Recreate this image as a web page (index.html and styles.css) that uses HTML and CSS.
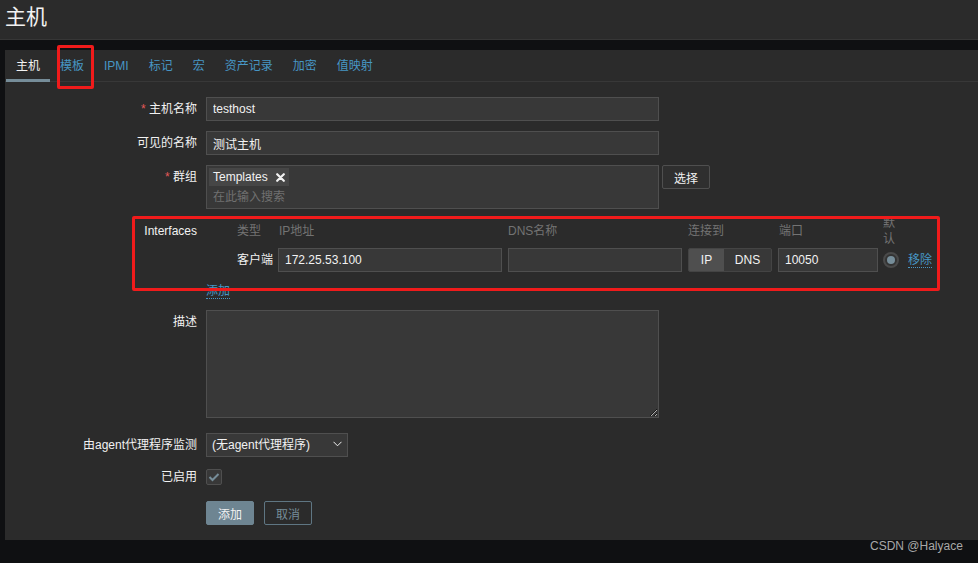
FILE: index.html
```html
<!DOCTYPE html>
<html lang="zh-CN">
<head>
<meta charset="utf-8">
<title>主机</title>
<link rel="stylesheet" href="styles.css">
</head>
<body>
<header class="page-header"><h1 class="page-title">主机</h1></header>
<main class="page-main">
  <section class="panel">
    <nav class="tabs">
      <a class="tab active">主机</a>
      <a class="tab">模板</a>
      <a class="tab">IPMI</a>
      <a class="tab">标记</a>
      <a class="tab">宏</a>
      <a class="tab">资产记录</a>
      <a class="tab">加密</a>
      <a class="tab">值映射</a>
    </nav>
    <form class="form">
      <div class="row">
        <label class="label"><span class="req">*</span> 主机名称</label>
        <div class="field"><input class="input wide" value="testhost"></div>
      </div>
      <div class="row">
        <label class="label">可见的名称</label>
        <div class="field"><input class="input wide" value="测试主机"></div>
      </div>
      <div class="row">
        <label class="label"><span class="req">*</span> 群组</label>
        <div class="field field-inline">
          <div class="multiselect">
            <span class="tag">Templates
              <svg class="tag-x" width="9" height="9" viewBox="0 0 9 9"><path d="M1.2 1.2 L7.8 7.8 M7.8 1.2 L1.2 7.8" stroke="#f2f2f2" stroke-width="2.2" stroke-linecap="round"/></svg>
            </span>
            <input class="ms-input" placeholder="在此输入搜索">
          </div>
          <button type="button" class="btn-grey">选择</button>
        </div>
      </div>
      <div class="row row-if">
        <label class="label label-if">Interfaces</label>
        <div class="field">
          <div class="if-grid">
            <span></span>
            <span class="if-head">类型</span>
            <span class="if-head if-ip">IP地址</span>
            <span class="if-head">DNS名称</span>
            <span class="if-head">连接到</span>
            <span class="if-head if-port">端口</span>
            <span class="if-head if-def">默认</span>
            <span></span>

            <span></span>
            <span class="if-type">客户端</span>
            <input class="input if-ip-in" value="172.25.53.100">
            <input class="input if-dns-in" value="">
            <div class="seg"><span class="seg-item on">IP</span><span class="seg-item">DNS</span></div>
            <input class="input if-port-in" value="10050">
            <span class="radio"><span class="radio-dot"></span></span>
            <a class="link">移除</a>
          </div>
          <div class="add-row"><a class="link">添加</a></div>
        </div>
      </div>
      <div class="row row-desc">
        <label class="label">描述</label>
        <div class="field"><textarea class="textarea"></textarea></div>
      </div>
      <div class="row row-agent">
        <label class="label">由agent代理程序监测</label>
        <div class="field">
          <div class="select"><span>(无agent代理程序)</span>
            <svg class="chev" width="9" height="6" viewBox="0 0 9 6"><path d="M0.5 0.8 L4.5 4.8 L8.5 0.8" fill="none" stroke="#f2f2f2" stroke-width="1"/></svg>
          </div>
        </div>
      </div>
      <div class="row row-enabled">
        <label class="label">已启用</label>
        <div class="field field-center">
          <span class="checkbox"><svg width="12" height="10" viewBox="0 0 12 10"><path d="M1.5 5 L4.5 8 L10.5 2" fill="none" stroke="#768d99" stroke-width="2"/></svg></span>
        </div>
      </div>
      <div class="row row-btns">
        <span></span>
        <div class="field field-inline">
          <button type="button" class="btn-main">添加</button>
          <button type="button" class="btn-alt">取消</button>
        </div>
      </div>
    </form>
  </section>
</main>
<div class="mark mark-tab"></div>
<div class="mark mark-if"></div>
<div class="watermark">CSDN @Halyace</div>
</body>
</html>
```
FILE: styles.css
```css
* { box-sizing: border-box; }
html, body { margin: 0; }
body {
  background: #0f1012;
  font-family: "Liberation Sans", Arial, "Noto Sans CJK SC", sans-serif;
  font-size: 12px;
  color: #f2f2f2;
  position: relative;
  min-height: 563px;
}
.page-header {
  height: 40px;
  background: #2b2b2b;
  border-bottom: 1px solid #363636;
  padding-left: 5px;
}
.page-title {
  margin: 0;
  font-size: 21px;
  font-weight: normal;
  line-height: 34px;
}
.page-main { padding: 10px 0 0 5px; }
.panel { background: #2b2b2b; padding-bottom: 15px; }

.tabs {
  display: flex;
  height: 32px;
  border-bottom: 1px solid #383838;
  padding-left: 1px;
}
.tab {
  height: 32px;
  padding: 0 10px;
  line-height: 32px;
  border-bottom: 3px solid transparent;
  color: #4796c4;
  text-decoration: none;
}
.tab.active { color: #f2f2f2; border-bottom-color: #768d99; }

.form { padding-top: 15px; }
.row {
  display: grid;
  grid-template-columns: 201px 1fr;
  margin-top: 10px;
}
.row:first-child { margin-top: 0; }
.row-if { margin-top: 6px; }
.row-desc { margin-top: 11px; }
.row-agent { margin-top: 15px; }
.row-enabled { margin-top: 8px; }
.row-btns { margin-top: 12px; }

.label {
  text-align: right;
  padding-right: 9px;
  line-height: 24px;
  white-space: nowrap;
}
.label-if { line-height: 32px; }
.req { color: #e45959; }

.field-inline { display: flex; align-items: flex-start; }
.field-center { display: flex; align-items: center; height: 24px; }

.input {
  height: 24px;
  background: #383838;
  border: 1px solid #4f4f4f;
  color: #f2f2f2;
  font: inherit;
  padding: 0 6px;
  outline: none;
  margin: 0;
  display: block;
}
.wide { width: 453px; }

.multiselect {
  width: 453px;
  height: 44px;
  background: #383838;
  border: 1px solid #4f4f4f;
  padding: 2px 2px 0 2px;
}
.tag {
  display: inline-flex;
  align-items: center;
  height: 18px;
  padding: 0 4px;
  gap: 8px;
  background: #464646;
  line-height: 18px;
  vertical-align: top;
}
.tag-x { display: block; }
.ms-input {
  display: block;
  width: 100%;
  height: 21px;
  background: transparent;
  border: 0;
  outline: none;
  font: inherit;
  color: #f2f2f2;
  padding: 1px 0 0 4px;
}
.ms-input::placeholder { color: #707070; }

.btn-grey {
  margin-left: 3px;
  width: 48px;
  height: 24px;
  background: #2f2f2f;
  border: 1px solid #4f4f4f;
  border-radius: 2px;
  color: #f2f2f2;
  font: inherit;
  padding: 0;
}

.if-grid {
  display: grid;
  grid-template-columns: 31px 41px 230px 180px 90px 105px 25px auto;
  grid-template-rows: 32px 24px;
  row-gap: 1px;
  align-items: center;
}
.if-head { color: #737373; line-height: 16px; }
.if-ip { padding-left: 1px; }
.if-port { padding-left: 1px; }
.if-def { width: 20px; }
.if-type { line-height: 24px; }
.if-ip-in { width: 224px; }
.if-dns-in { width: 174px; }
.if-port-in { width: 100px; }

.seg {
  display: flex;
  width: 84px;
  height: 24px;
  background: #383838;
  border: 1px solid #444;
  border-radius: 2px;
  overflow: hidden;
}
.seg-item {
  flex: 1;
  text-align: center;
  line-height: 22px;
}
.seg-item.on { flex: 0 0 35px; background: #4f4f4f; }

.radio {
  width: 16px;
  height: 16px;
  border-radius: 50%;
  border: 2px solid #4a4a4a;
  background: #333;
  display: flex;
  align-items: center;
  justify-content: center;
}
.radio-dot {
  width: 8px;
  height: 8px;
  border-radius: 50%;
  background: #768d99;
}

.link {
  color: #4796c4;
  display: inline-block;
  line-height: 14px;
  border-bottom: 1px dotted #4796c4;
  cursor: pointer;
}
.if-grid .link { justify-self: start; }
.add-row { margin-top: 12px; height: 15px; }

.textarea {
  display: block;
  width: 453px;
  height: 108px;
  background: #383838;
  border: 1px solid #4f4f4f;
  color: #f2f2f2;
  font: inherit;
  margin: 0;
  padding: 4px 6px;
  resize: both;
  outline: none;
  color-scheme: dark;
}

.select {
  width: 142px;
  height: 24px;
  background: #383838;
  border: 1px solid #4f4f4f;
  display: flex;
  align-items: center;
  justify-content: space-between;
  padding: 0 5px 0 5px;
  line-height: 22px;
}
.chev { display: block; margin-top: -3px; }

.checkbox {
  width: 16px;
  height: 16px;
  background: #383838;
  border: 1px solid #4f4f4f;
  border-radius: 2px;
  display: flex;
  align-items: center;
  justify-content: center;
}
.checkbox svg { display: block; }

.btn-main, .btn-alt {
  width: 48px;
  height: 24px;
  border-radius: 2px;
  font: inherit;
  padding: 0;
}
.btn-main {
  background: #6e8592;
  border: 1px solid #6e8592;
  color: #f2f2f2;
}
.btn-alt {
  margin-left: 10px;
  background: #2b2b2b;
  border: 1px solid #5f7683;
  color: #768d99;
}

.mark {
  position: absolute;
  border: 3px solid #f01b1b;
  border-radius: 2px;
  pointer-events: none;
}
.mark-tab { left: 57px; top: 45px; width: 37px; height: 44px; }
.mark-if { left: 132px; top: 216px; width: 808px; height: 75px; }

.watermark {
  position: absolute;
  left: 870px;
  top: 539px;
  color: #a8a8a8;
  font-size: 12px;
  line-height: 14px;
}
```
